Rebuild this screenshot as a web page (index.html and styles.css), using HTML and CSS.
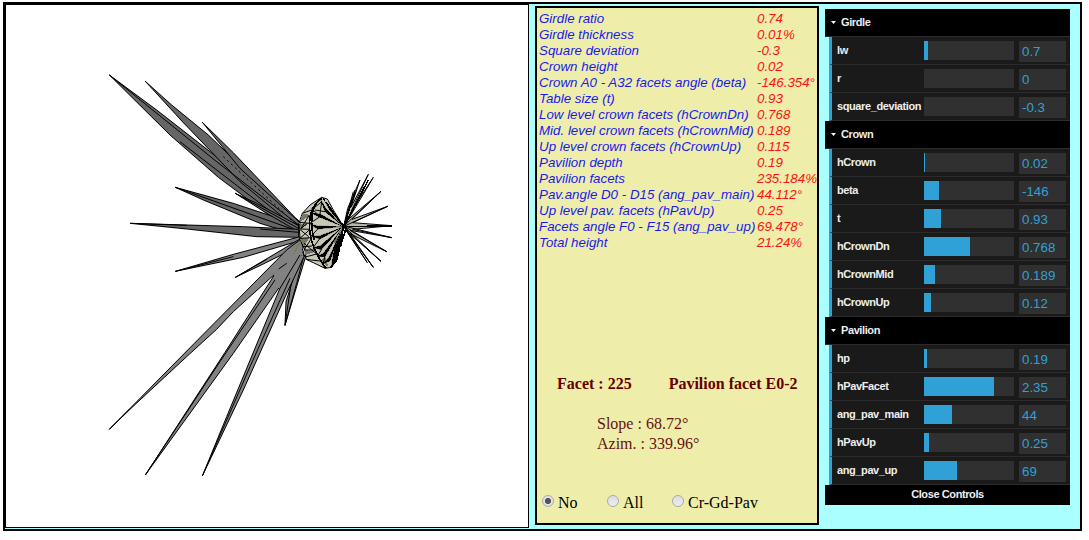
FILE: index.html
```html
<!DOCTYPE html>
<html lang="en">
<head>
<meta charset="utf-8">
<title>Diamond model</title>
<link rel="stylesheet" href="styles.css">
</head>
<body>
<main class="app">
  <svg class="view" viewBox="6 5 522 522" shape-rendering="crispEdges">
    <g transform="translate(100 60) scale(.33333)" class="dark">
      <path class="fill" d="M210 225L375 310L430 320L599 485L595 510L520 475L355 352Z"/>
      <path d="M28 45L170 150L375 310L599 485L595 510L520 475L355 352L210 225Z"/>
      <path d="M136 64L215 135L325 225L599 487L590 505L420 365L250 188Z"/>
      <path d="M307 187L400 278L599 487L420 325Z"/>
      <path class="line" d="M28 45L350 305L596 495M240 245L590 515"/>
      <path class="line" d="M370 290L590 495" stroke-dasharray="6 10"/>
      <path d="M226 382L400 430L596 495L596 525L480 490L310 420Z"/>
      <path class="line" d="M226 382L596 514"/>
      <path d="M406 400L470 430L596 497L596 515L500 460Z"/>
      <path class="line" d="M406 400L595 505"/>
      <path d="M91 490L430 500L596 508L596 532L470 530L260 507Z"/>
      <path class="line" d="M91 490L260 496M480 507L596 517"/>
    </g>
    <g transform="translate(100 220) scale(.33333)" class="mid">
      <path d="M226 154L400 103L600 50L600 62L430 112Z"/>
      <path class="line" d="M226 154L400 110"/>
      <path d="M406 172L600 57L604 75L490 132Z"/>
      <path class="line" d="M406 172L500 118"/>
      <path d="M555 316L558 245L607 90L616 113Z"/>
      <path class="line" d="M555 316L574 185L610 95M555 316L590 190L612 105"/>
      <path d="M307 768L380 590L545 192L604 80L612 110L558 225L430 510Z"/>
      <path class="line" d="M307 768L450 440L570 175"/>
      <path d="M136 765L375 397L525 162L600 70L610 95L545 192L400 400Z"/>
      <path class="line" d="M136 765L360 425L545 150"/>
      <path d="M28 628L283 370L560 90L602 58L610 85L525 162L400 275L350 328L260 410L90 568Z"/>
      <path class="fill" d="M520 165L602 66L608 100L560 190L535 205Z"/>
      <path class="line" d="M28 628L90 566M536 147L560 130M540 205L600 105" />
      <path d="M602 60L580 103" class="accent" stroke-dasharray="8 3"/>
    </g>
    <g transform="translate(270 160) scale(.33333)">
      <path class="gem" d="M88 187L97 160L120 135L155 112L172 117L190 150L218 195L213 240L200 300L185 322L165 325L130 308L108 298L105 270L90 235L88 208Z"/>
      <path class="shade" d="M97 160L122 165L88 187ZM88 190L112 193L92 207ZM90 235L116 235L102 262ZM104 270L135 275L106 286ZM150 303L165 290L176 322ZM192 240L208 225L200 290Z"/>
      <path class="facet-edge" d="M122 158L152 163L215 198L150 172ZM118 193L145 198L216 200L145 207ZM124 228L148 228L214 203L150 237ZM130 262L150 258L212 205L155 268ZM143 288L160 280L212 210L165 290ZM158 312L178 290L212 215L180 303ZM152 120L170 148L217 197L165 155ZM184 320L192 270L218 205L202 295ZM163 120L190 158L216 195L180 152Z"/>
      <path class="line" d="M97 160L125 150L155 125M88 187L118 190M118 165L92 207L120 208M112 190L92 207M120 208L90 235L126 233M116 230L88 207M126 233L102 270L135 270M102 250L140 282L106 291M140 282L165 325M125 145L150 170L120 190L145 205L124 228L150 235L130 262L155 268L143 288L165 290L158 315M155 125L150 163M135 150L165 155M108 298L150 303M100 260L126 258"/>
      <path class="rim" d="M155 115C108 145 111 220 137 275C149 298 158 313 170 325M148 119C120 145 121 200 133 240M160 115L200 171L220 200L213 245L200 300L182 323"/>
      <path class="spark" d="M166 120h7v7h-7z"/>
      <path class="ray" d="M221 200L233 145L270 60L243 141L295 43L246 149L310 52L235 178L333 94L246 178L353 139L248 188L365 197L248 208L365 233L240 211L350 275L240 221L333 304L230 213L310 322L228 210L292 308Z"/>
      <path class="line" d="M222 198L250 95M222 198L255 90M223 197L333 94M224 198L353 139M225 202L333 304M225 200L350 275M225 199L365 233M225 201L310 322"/>
      <path class="rim" d="M220 200L256 95M220 200L270 110M222 200L295 60M223 200L365 198M215 190L228 205L211 260"/>
    </g>
  </svg>
  <section class="info">
    <dl class="params">
      <dt>Girdle ratio</dt><dd>0.74</dd>
      <dt>Girdle thickness</dt><dd>0.01%</dd>
      <dt>Square deviation</dt><dd>-0.3</dd>
      <dt>Crown height</dt><dd>0.02</dd>
      <dt>Crown A0 - A32 facets angle (beta)</dt><dd>-146.354°</dd>
      <dt>Table size (t)</dt><dd>0.93</dd>
      <dt>Low level crown facets (hCrownDn)</dt><dd>0.768</dd>
      <dt>Mid. level crown facets (hCrownMid)</dt><dd>0.189</dd>
      <dt>Up level crown facets (hCrownUp)</dt><dd>0.115</dd>
      <dt>Pavilion depth</dt><dd>0.19</dd>
      <dt>Pavilion facets</dt><dd>235.184%</dd>
      <dt>Pav.angle D0 - D15 (ang_pav_main)</dt><dd>44.112°</dd>
      <dt>Up level pav. facets (hPavUp)</dt><dd>0.25</dd>
      <dt>Facets angle F0 - F15 (ang_pav_up)</dt><dd>69.478°</dd>
      <dt>Total height</dt><dd>21.24%</dd>
    </dl>
    <div class="facet"><span>Facet : 225</span><span>Pavilion facet E0-2</span></div>
    <div class="angles"><div>Slope : 68.72°</div><div>Azim. : 339.96°</div></div>
    <form class="choices">
      <label><input type="radio" name="show" checked>No</label>
      <label><input type="radio" name="show">All</label>
      <label><input type="radio" name="show">Cr-Gd-Pav</label>
    </form>
  </section>
  <aside class="gui">
    <h2>Girdle</h2>
    <div class="row"><span>lw</span><div class="slider"><i style="width:4px"></i></div><b>0.7</b></div>
    <div class="row"><span>r</span><div class="slider"></div><b>0</b></div>
    <div class="row"><span>square_deviation</span><div class="slider"></div><b>-0.3</b></div>
    <h2>Crown</h2>
    <div class="row"><span>hCrown</span><div class="slider"><i style="width:1px"></i></div><b>0.02</b></div>
    <div class="row"><span>beta</span><div class="slider"><i style="width:15px"></i></div><b>-146</b></div>
    <div class="row"><span>t</span><div class="slider"><i style="width:17px"></i></div><b>0.93</b></div>
    <div class="row"><span>hCrownDn</span><div class="slider"><i style="width:46px"></i></div><b>0.768</b></div>
    <div class="row"><span>hCrownMid</span><div class="slider"><i style="width:11px"></i></div><b>0.189</b></div>
    <div class="row"><span>hCrownUp</span><div class="slider"><i style="width:7px"></i></div><b>0.12</b></div>
    <h2>Pavilion</h2>
    <div class="row"><span>hp</span><div class="slider"><i style="width:3px"></i></div><b>0.19</b></div>
    <div class="row"><span>hPavFacet</span><div class="slider"><i style="width:70px"></i></div><b>2.35</b></div>
    <div class="row"><span>ang_pav_main</span><div class="slider"><i style="width:28px"></i></div><b>44</b></div>
    <div class="row"><span>hPavUp</span><div class="slider"><i style="width:5px"></i></div><b>0.25</b></div>
    <div class="row"><span>ang_pav_up</span><div class="slider"><i style="width:33px"></i></div><b>69</b></div>
    <div class="close">Close Controls</div>
  </aside>
</main>
</body>
</html>
```
FILE: styles.css
```css
* { box-sizing: border-box; }
body { margin: 0; padding: 2px 0 0 3px; background: #fff; overflow: hidden; }
.app { display: flex; align-items: flex-start; width: 1079px; height: 529px; border: 2px solid #000; background: #aff; }
.view { flex: none; width: 524px; height: 524px; border: 1px solid #000; background: #fff; }
.view path { stroke: #000; stroke-width: 3; fill: none; stroke-linejoin: bevel; }
.view .dark path { fill: #666; }
.view .mid path { fill: #828282; }
.view .dark .line, .view .mid .line { fill: none; }
.view .dark .fill, .view .mid .fill { stroke: none; }
.view .mid .accent { stroke: #777700; }
.view .gem { fill: #c9c8b5; }
.view .shade { fill: #77776e; stroke: none; }
.view .facet-edge { fill: #000; stroke-width: 1; }
.view .rim { stroke-width: 5; }
.view .ray { fill: #b8b7a4; }
.view .spark { fill: #b8b8f0; stroke: none; }

.info { flex: none; width: 284px; height: 519px; margin: 2px 0 0 6px; border: 2px solid #000; background: #eeeeaa; font: 16px/20px "Liberation Serif", serif; }
.params { display: grid; grid-template-columns: 218px auto; grid-auto-rows: 16px; margin: 3px 0 0 2px; font: italic 13.333px/16px "Liberation Sans", sans-serif; white-space: nowrap; }
.params dt { color: #1a1aee; }
.params dd { margin: 0; color: #f11; }
.facet { display: flex; gap: 37px; margin: 123px 0 0 20px; font-weight: bold; color: #660000; }
.angles { margin: 20px 0 0 60px; color: #661111; }
.choices { display: flex; margin: 39px 0 0 5px; }
.choices label { display: flex; width: 65px; white-space: nowrap; }
.choices input { appearance: none; flex: none; width: 12px; height: 12px; margin: 2px 4px 0 0; border: 1px solid #aaa; border-radius: 50%; background: linear-gradient(#ddd, #eee); }
.choices input:checked { background: radial-gradient(circle, #555 0 2.7px, #e4e4e4 3.5px); }

.gui { flex: none; width: 245px; margin: 5px 0 0 6px; font: bold 11px/27px "Liberation Sans", sans-serif; letter-spacing: -0.4px; color: #eee; }
.gui h2 { display: flex; align-items: center; gap: 5px; height: 28px; margin: 0; padding-left: 6px; border-bottom: 1px solid #2c2c2c; background: #000; font: inherit; }
.gui h2::before { content: ""; width: 5px; height: 3px; background: #fff; clip-path: polygon(0 0, 100% 0, 50% 100%); }
.row { display: flex; height: 28px; margin-left: 4px; padding-left: 5px; border-left: 3px solid #2fa1d6; border-bottom: 1px solid #2c2c2c; background: #1a1a1a; }
.row span { flex: none; width: 87px; white-space: nowrap; }
.slider { flex: none; width: 90px; height: 19px; margin: 4px 5px 0 0; background: #303030; }
.slider i { display: block; height: 100%; background: #2fa1d6; }
.row b { width: 47px; height: 21px; margin-top: 4px; padding-left: 3px; background: #303030; color: #2fa1d6; font: 13.333px/21px "Liberation Sans", sans-serif; letter-spacing: 0; }
.close { height: 20px; background: #000; line-height: 19px; text-align: center; }
```
